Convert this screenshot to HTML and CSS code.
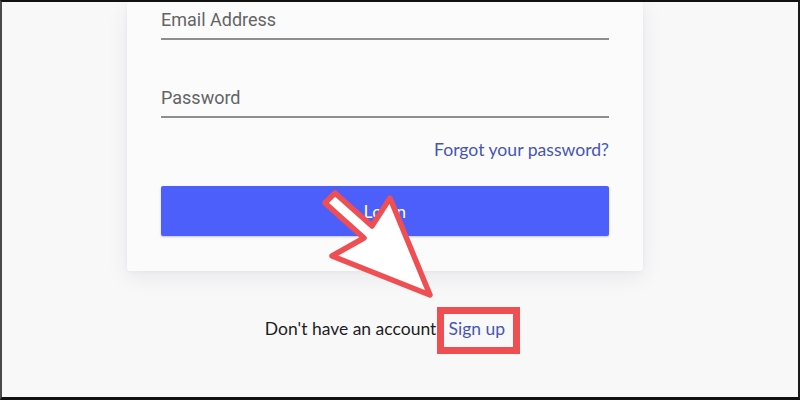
FILE: index.html
```html
<!DOCTYPE html>
<html>
<head>
<meta charset="utf-8">
<link rel="stylesheet" href="styles.css">
</head>
<body>
<div class="frame">
  <div class="card">
    <div class="field field-email"><span class="label">Email Address</span></div>
    <div class="field field-password"><span class="label">Password</span></div>
    <div class="forgot-row"><a class="link forgot">Forgot your password?</a></div>
    <button class="login-btn">Login</button>
  </div>
  <p class="signup-row">Don't have an account? <a class="link signup">Sign up</a></p>

  <div class="highlight-box"></div>
  <svg class="arrow" width="140" height="130" viewBox="300 180 140 130">
    <polygon points="335,193 325,203 364,238 332,256 430,295 390,198 372,226" fill="#ffffff" stroke="#ef4f52" stroke-width="5.5" stroke-linejoin="round"/>
  </svg>
</div>
</body>
</html>
```

FILE: styles.css
```css
html, body {
  margin: 0;
  padding: 0;
}

body {
  width: 800px;
  height: 400px;
  overflow: hidden;
  background: #f8f8f9;
}

.frame {
  position: relative;
  box-sizing: border-box;
  width: 800px;
  height: 400px;
  border-top: 2px solid #111;
  border-left: 2px solid #4a4a4a;
  border-right: 2px solid #1a1a1a;
  border-bottom: 3px solid #111;
  background: #f8f8f9;
  display: flex;
  flex-direction: column;
  align-items: center;
  padding-right: 30px;
  overflow: hidden;
}

.card {
  box-sizing: border-box;
  width: 516px;
  background: #fbfbfc;
  padding: 7px 34px 35px;
  border-radius: 0 0 3px 3px;
  box-shadow: 0 6px 22px rgba(30, 30, 60, 0.07), 0 1px 4px rgba(30, 30, 60, 0.04);
  display: flex;
  flex-direction: column;
}

.field {
  padding-bottom: 7px;
  border-bottom: 2px solid #8e8e8e;
}

.label {
  display: block;
  font-family: Roboto, "Liberation Sans", sans-serif;
  font-size: 18px;
  line-height: 22px;
  color: #646464;
}

.field-password {
  margin-top: 47px;
}

.forgot-row {
  display: flex;
  justify-content: flex-end;
  margin-top: 21px;
}

.link {
  color: #4656b4;
  text-decoration: none;
}

.forgot {
  font-family: Lato, "Open Sans", sans-serif;
  font-size: 17.6px;
  line-height: 22px;
}

.login-btn {
  margin-top: 25px;
  height: 50px;
  border: none;
  border-radius: 2px;
  background: #4c5ffb;
  color: #ffffff;
  font-family: Lato, "Open Sans", sans-serif;
  font-size: 17.5px;
  letter-spacing: 0.3px;
  box-shadow: 0 1px 2px rgba(30, 40, 120, 0.25);
}

.signup-row {
  margin: 47px 0 0;
  font-family: Lato, "Open Sans", sans-serif;
  font-size: 17.5px;
  line-height: 22px;
  color: #1e1e1e;
}

.highlight-box {
  position: absolute;
  left: 435px;
  top: 305px;
  width: 69px;
  height: 33px;
  border: 7px solid #ef4f52;
}

.arrow {
  position: absolute;
  left: 298px;
  top: 178px;
}
```
